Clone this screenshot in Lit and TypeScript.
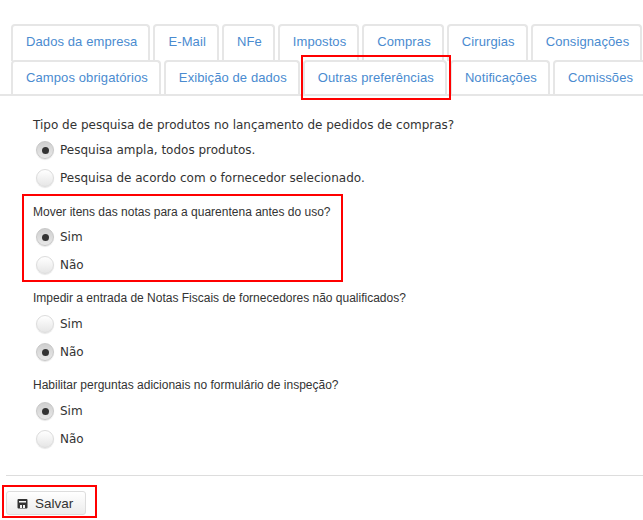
import { LitElement, html, css } from "lit";
import { customElement } from "lit/decorators.js";

const row1 = ["Dados da empresa", "E-Mail", "NFe", "Impostos", "Compras", "Cirurgias", "Consignações"];
const row2 = ["Campos obrigatórios", "Exibição de dados", "Outras preferências", "Notificações", "Comissões"];

const groups = [
  { q: "Tipo de pesquisa de produtos no lançamento de pedidos de compras?", opts: ["Pesquisa ampla, todos produtos.", "Pesquisa de acordo com o fornecedor selecionado."], sel: 0, cls: "g1" },
  { q: "Mover itens das notas para a quarentena antes do uso?", opts: ["Sim", "Não"], sel: 0, cls: "g2" },
  { q: "Impedir a entrada de Notas Fiscais de fornecedores não qualificados?", opts: ["Sim", "Não"], sel: 1, cls: "g3" },
  { q: "Habilitar perguntas adicionais no formulário de inspeção?", opts: ["Sim", "Não"], sel: 0, cls: "g3" },
];

@customElement("app-root")
export class AppRoot extends LitElement {
  static styles = css`
    :host { display: block; position: relative; width: 643px; height: 520px; overflow: hidden; background: #fff;
      font-family: "Liberation Sans", Arial, sans-serif; color: #333; }
    .tabs { padding: 24px 0 0 9px; border-bottom: 2px solid #e6e6e6; height: 70px; box-sizing: content-box; overflow: hidden; }
    .row { display: flex; gap: 3px; padding-left: 2px; height: 36px; white-space: nowrap; }
    .tab { box-sizing: border-box; height: 37px; padding: 8px 11px 0 13px; border: 2px solid #e6e6e6; border-bottom: 0; border-radius: 4px 4px 0 0;
      font-size: 13px; line-height: 16px; letter-spacing: 0.1px; color: #4a8bd0; flex: none; background: #fff; }
    .body { padding: 21px 0 0 33px; }
    .group { margin-bottom: 11px; }
    .group.g1 { margin-bottom: 12px; }
    .q { font-size: 12px; line-height: 17px; color: #333; height: 17px; }
    .g1 .q { font-family: "DejaVu Sans", sans-serif; margin-bottom: 2px; }
    .g2 .q { margin-bottom: 2px; }
    .g3 .q { margin-bottom: 3px; }
    .opt { display: flex; align-items: center; gap: 6px; height: 28px; margin-left: 3px; font-size: 12px; font-family: "DejaVu Sans", sans-serif; }
    .radio { width: 18px; height: 18px; border-radius: 50%; box-sizing: border-box; border: 1px solid #dcdcdc; flex: none;
      background: linear-gradient(#fff, #e6e6e6); display: flex; align-items: center; justify-content: center; box-shadow: 0 1px 1px rgba(0,0,0,.1); }
    .radio.on { background: linear-gradient(#cfcfcf, #e8e8e8); border-color: #c8c8c8; }
    .radio.on::after { content: ""; width: 7px; height: 7px; border-radius: 50%; background: #333; }
    .rule { position: absolute; left: 6px; right: 0; top: 475px; border-top: 1px solid #ddd; }
    .btn { position: absolute; left: 6px; top: 491px; width: 80px; height: 24px; box-sizing: border-box; border: 1px solid #ddd; border-radius: 3px;
      background: linear-gradient(#fff, #ececec); display: flex; align-items: center; gap: 7px; padding-left: 10px; font-size: 13.5px; color: #333; }
    .mark { position: absolute; border: 2px solid #f00; box-sizing: border-box; pointer-events: none; }
    .m1 { left: 301px; top: 55px; width: 150px; height: 45px; }
    .m2 { left: 22px; top: 194px; width: 321px; height: 88px; }
    .m3 { left: 2px; top: 485px; width: 95px; height: 33px; }
  `;

  render() {
    return html`
      <div class="tabs">
        <div class="row">${row1.map((t) => html`<div class="tab">${t}</div>`)}</div>
        <div class="row">${row2.map((t) => html`<div class="tab">${t}</div>`)}</div>
      </div>
      <div class="body">
        ${groups.map((g) => html`
          <div class="group ${g.cls}">
            <div class="q">${g.q}</div>
            ${g.opts.map((o, i) => html`<div class="opt"><span class="radio ${i === g.sel ? "on" : ""}"></span>${o}</div>`)}
          </div>`)}
      </div>
      <div class="rule"></div>
      <div class="btn">
        <svg width="11" height="11" viewBox="0 0 11 11"><path fill="#333" d="M1.5 1h8a1 1 0 0 1 1 1v7.5a1 1 0 0 1-1 1h-8a1 1 0 0 1-1-1V2a1 1 0 0 1 1-1zM2 3v1.5h7V3zm1 4v3h2V7zm3 0v3h2V7z" fill-rule="evenodd"/></svg>
        Salvar
      </div>
      <div class="mark m1"></div>
      <div class="mark m2"></div>
      <div class="mark m3"></div>
    `;
  }
}
